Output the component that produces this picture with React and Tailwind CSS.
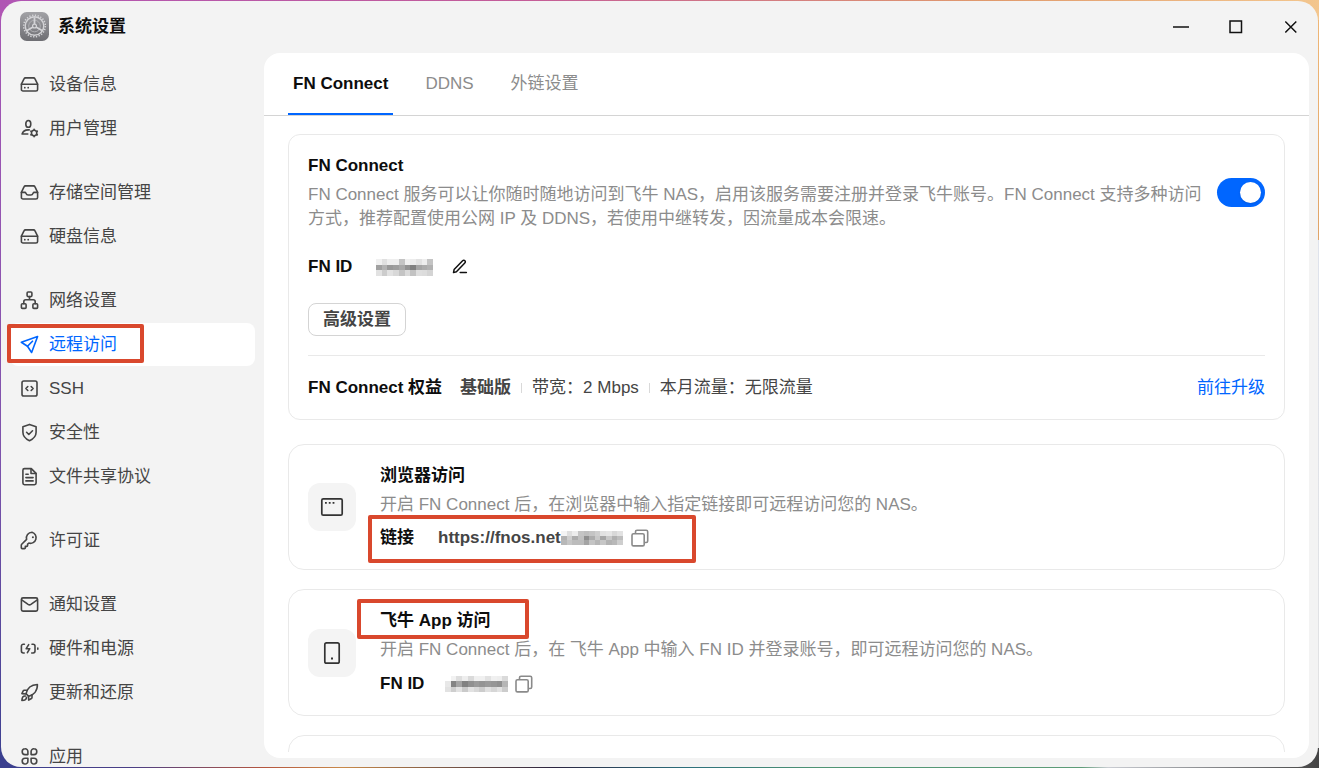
import { useState } from 'react';

const ICONS = {
  drive: (
    <>
      <path d="M1.4 9.2 4 3.9c.3-.7.9-1 1.600-1h7.800c.7 0 1.300.3 1.600 1l2.600 5.300v5.200c0 .9-.7 1.600-1.600 1.600H3c-.9 0-1.600-.7-1.600-1.600z" />
      <path d="M1.400 9.200h16.200" />
      <path d="M4.800 12.700h.01M8.200 12.700h.01" strokeWidth="1.800" />
    </>
  ),
  user: (
    <>
      <ellipse cx="8.300" cy="4.900" rx="2.500" ry="3.400" />
      <path d="M9.200 10.900c-3.600-.3-6.300 1.200-7.100 4.100H7.800" />
      <circle cx="14.100" cy="14" r="2.700" />
      <path d="M14.100 10.300v1M14.100 16.700v1M10.900 12.200l.8.400M16.500 15.400l.8.400M10.900 15.800l.8-.4M16.500 12.600l.8-.4" />
    </>
  ),
  inbox: (
    <>
      <path d="M1.400 9.400 4 3.900c.3-.7.9-1 1.600-1h7.800c.7 0 1.300.3 1.600 1l2.600 5.500v5c0 .9-.7 1.600-1.600 1.600H3c-.9 0-1.600-.7-1.600-1.600z" />
      <path d="M1.400 9.400h3.400c.6 0 .9.300 1.100.8.500 1.200 1.200 1.800 2.200 1.800h2.800c1 0 1.700-.6 2.200-1.800.2-.5.5-.8 1.100-.8h3.400" />
    </>
  ),
  network: (
    <>
      <rect x="7.100" y="1" width="4.800" height="4.600" rx="1" />
      <rect x="1.400" y="12.700" width="4.700" height="4.700" rx="1" />
      <rect x="12.900" y="12.700" width="4.700" height="4.700" rx="1" />
      <path d="M9.500 5.600v3.200M3.800 12.700v-1.900c0-1.200.8-2 2-2h7.400c1.200 0 2 .8 2 2v1.900" />
    </>
  ),
  plane: (
    <>
      <path d="M17.600 1.500 1.300 7.300l6.200 3.900 4.100 6.300z" />
      <path d="m7.500 11.200 5-5" />
    </>
  ),
  ssh: (
    <>
      <rect x="2" y="2" width="15" height="15" rx="1.800" />
      <path d="M7.800 7.500 5.900 9.500l1.900 2M11.200 7.500l1.900 2-1.900 2" />
    </>
  ),
  shield: (
    <>
      <path d="M9.500 1.400 2.900 3.700v5.600c0 4 2.700 6.600 6.600 8.400 3.900-1.800 6.600-4.400 6.600-8.400V3.700z" />
      <path d="m6.600 9.300 2.200 2.200 3.700-3.700" />
    </>
  ),
  file: (
    <>
      <path d="M11.300 1.600H4.500c-.9 0-1.600.7-1.600 1.600v12.900c0 .9.700 1.600 1.600 1.600h10c.9 0 1.600-.7 1.600-1.600V6.400z" />
      <path d="M11 1.800v4.700h4.900M5.900 7.300h2.300M5.900 10.600h7.200M5.900 13.900h7.200" />
    </>
  ),
  key: (
    <>
      <path d="M12 1.300a5.600 5.600 0 0 0-5.400 7.100L1.700 13.300c-.3.300-.4.600-.4 1v2.400c0 .5.400.9.900.9h2.300c.5 0 .8-.4.800-.8v-1.400h1.400c.5 0 .9-.4.900-.9v-1.400l1.300-1A5.600 5.600 0 1 0 12 1.300z" />
      <path d="M12.900 6.200h.01" strokeWidth="2" />
    </>
  ),
  mail: (
    <>
      <rect x="1.400" y="2.900" width="16.200" height="13.200" rx="1.600" />
      <path d="m1.700 4.800 6.400 4.600c.9.600 1.900.6 2.800 0l6.400-4.600" />
    </>
  ),
  power: (
    <>
      <path d="M4.400 5.200H3.300c-1 0-1.900.9-1.900 1.900v5c0 1 .9 1.900 1.900 1.900h.9M12 5.200h1.100c1 0 1.900.9 1.900 1.900v5c0 1-.9 1.900-1.900 1.900H11.700M17.800 9v1.300" />
      <path d="M8.700 5.700 6.200 9.700h3.600l-2.400 4" />
    </>
  ),
  rocket: (
    <>
      <path d="M6 10.700c1-4.700 4.800-8.900 11.400-9.200.2 6.600-4.200 10.500-8.700 11.800z" />
      <path d="M7 7.300H4.200c-.5 0-.8.200-1 .6L1.900 10.600l4.200.4M12 11.700v2.800c0 .5-.2.800-.6 1l-2.700 1.600-.2-3.900" />
      <path d="M5.300 13c-1.800-.3-3.300 1-3.400 4.500 3.300 0 4.600-1.500 4.600-3.300" />
    </>
  ),
  apps: (
    <>
      <path d="M7.900 7.600V4.500A2.700 2.700 0 0 0 5 1.800c-1.500 0-2.800 1.300-2.800 2.900 0 1.600 1.200 2.900 2.800 2.900z" />
      <path d="M11.100 7.600V4.500a2.700 2.700 0 0 1 2.900-2.700c1.500 0 2.800 1.300 2.800 2.900 0 1.600-1.200 2.900-2.800 2.900z" />
      <path d="M7.900 11.200v3.100A2.700 2.700 0 0 1 5 17c-1.500 0-2.800-1.300-2.800-2.900 0-1.600 1.200-2.900 2.800-2.900z" />
      <path d="M11.100 11.200v3.100A2.700 2.700 0 0 0 14 17c1.500 0 2.800-1.300 2.800-2.900 0-1.600-1.200-2.900-2.800-2.900z" />
    </>
  ),
};

const NAV_GROUPS = [
  [
    { id: 'device', label: '设备信息', icon: 'drive' },
    { id: 'users', label: '用户管理', icon: 'user' },
  ],
  [
    { id: 'storage', label: '存储空间管理', icon: 'inbox' },
    { id: 'disk', label: '硬盘信息', icon: 'drive' },
  ],
  [
    { id: 'network', label: '网络设置', icon: 'network' },
    { id: 'remote', label: '远程访问', icon: 'plane', marked: true },
    { id: 'ssh', label: 'SSH', icon: 'ssh' },
    { id: 'security', label: '安全性', icon: 'shield' },
    { id: 'share', label: '文件共享协议', icon: 'file' },
  ],
  [{ id: 'license', label: '许可证', icon: 'key' }],
  [
    { id: 'notify', label: '通知设置', icon: 'mail' },
    { id: 'power', label: '硬件和电源', icon: 'power' },
    { id: 'update', label: '更新和还原', icon: 'rocket' },
  ],
  [{ id: 'apps', label: '应用', icon: 'apps' }],
];

const TABS = ['FN Connect', 'DDNS', '外链设置'];

// Grey levels of the masked names, one row per line of blocks
const MASK_ID = [
  [240, 224, 238, 238, 196, 240, 236, 226, 238, 196],
  [160, 178, 152, 158, 168, 146, 128, 164, 172, 178],
  [226, 204, 226, 216, 196, 218, 194, 222, 220, 212],
];
const MASK_LINK = [
  [244, 222, 236, 196, 190, 196, 206, 226, 230, 216, 226],
  [178, 206, 172, 192, 142, 172, 200, 166, 200, 176, 190],
  [184, 198, 188, 188, 164, 196, 182, 198, 178, 184, 206],
];
const MASK_APP = [
  [255, 242, 222, 238, 218, 240, 240, 226, 240, 238, 218],
  [232, 132, 164, 130, 144, 154, 148, 154, 150, 144, 182],
  [226, 206, 226, 202, 226, 216, 204, 224, 214, 226, 204],
];

function Icon({ name }) {
  return (
    <svg viewBox="0 0 19 19" className="size-[19px] shrink-0" fill="none" stroke="currentColor" strokeWidth="1.600" strokeLinecap="round" strokeLinejoin="round" aria-hidden="true">
      {ICONS[name]}
    </svg>
  );
}

function Mask({ rows, className }) {
  return (
    <svg viewBox={`0 0 ${rows[0].length} 3`} preserveAspectRatio="none" shapeRendering="crispEdges" className={className} aria-hidden="true">
      {rows.map((row, y) =>
        row.map((v, x) => <rect key={`${x}-${y}`} x={x} y={y} width="1" height="1" fill={`rgb(${v},${v},${v})`} />)
      )}
    </svg>
  );
}

function CopyButton() {
  return (
    <button type="button" aria-label="复制" className="cursor-pointer text-[#8a8a8a]">
      <svg viewBox="0 0 18 18" className="size-[18px]" fill="none" stroke="currentColor" strokeWidth="1.600" strokeLinejoin="round">
        <rect x="1" y="4.700" width="12.200" height="12.200" rx="1.500" />
        <path d="M4.500 4.500V2.800c0-.8.700-1.500 1.500-1.500h9.200c.8 0 1.500.7 1.500 1.500V12c0 .8-.7 1.500-1.500 1.500h-1.700" />
      </svg>
    </button>
  );
}

function Marker({ className }) {
  return <span className={`absolute border-4 border-[#d9482d] rounded-[2px] pointer-events-none ${className}`} />;
}

function TitleBar() {
  return (
    <header className="h-[52px] shrink-0 flex items-center pl-[19px] pb-px">
      <svg viewBox="0 0 30 30" className="size-[29px]" aria-hidden="true">
        <defs>
          <linearGradient id="gear-bg" x1="0" y1="0" x2="0" y2="1">
            <stop offset="0" stopColor="#a2a2a6" />
            <stop offset="1" stopColor="#6e6e73" />
          </linearGradient>
        </defs>
        <rect width="30" height="30" rx="7" fill="url(#gear-bg)" />
        <g fill="none" stroke="#d3d3d6">
          <circle cx="15" cy="14.500" r="11.200" strokeWidth="1.600" strokeDasharray="1.400 1.532" />
          <circle cx="15" cy="14.500" r="9.600" strokeWidth="1.500" />
          <circle cx="15" cy="14.500" r="6" strokeWidth="0.900" stroke="#b4b4b8" />
          <path d="M15 5.500v7M13.500 15.500l-6.300 3.700M16.500 15.500l6.300 3.700" strokeWidth="1.800" />
          <circle cx="15" cy="14.500" r="2" strokeWidth="1.300" />
        </g>
      </svg>
      <h1 className="ml-[9px] text-[17px] leading-6 font-bold text-[#0d0d0d]">系统设置</h1>
      <div className="ml-auto flex self-stretch text-[#111]">
        <button type="button" aria-label="最小化" className="w-[55px] flex items-center justify-center">
          <svg viewBox="0 0 16 16" className="size-4" stroke="currentColor" strokeWidth="1.600"><path d="M0 8h16" /></svg>
        </button>
        <button type="button" aria-label="最大化" className="w-[55px] flex items-center justify-center">
          <svg viewBox="0 0 16 16" className="size-4" fill="none" stroke="currentColor" strokeWidth="1.500"><rect x="2" y="2" width="11.500" height="11.500" /></svg>
        </button>
        <button type="button" aria-label="关闭" className="w-[55px] flex items-center justify-center">
          <svg viewBox="0 0 16 16" className="size-4" stroke="currentColor" strokeWidth="1.500"><path d="m2.300 2.500 11 11M13.300 2.500l-11 11" /></svg>
        </button>
      </div>
    </header>
  );
}

function Sidebar({ active, onSelect }) {
  return (
    <nav className="w-[263px] shrink-0 pt-2.5 px-[9px] flex flex-col gap-[21px] overflow-hidden">
      {NAV_GROUPS.map((group, i) => (
        <ul key={i} className="flex flex-col gap-px">
          {group.map((item) => (
            <li key={item.id} className="relative">
              <button
                type="button"
                onClick={() => onSelect(item.id)}
                className={`w-full h-[43px] px-2.5 flex items-center gap-2.5 rounded-lg text-[17px] leading-6 text-left cursor-pointer ${
                  active === item.id ? 'bg-white text-[#0066ff]' : 'text-[#454545]'
                }`}
              >
                <Icon name={item.icon} />
                {item.label}
              </button>
              {item.marked && <Marker className="-left-[3px] top-px w-[137px] h-[39px]" />}
            </li>
          ))}
        </ul>
      ))}
    </nav>
  );
}

function ConnectCard() {
  const [enabled, setEnabled] = useState(true);

  return (
    <section className="border border-[#e9e9e9] rounded-xl p-[19px]">
      <div className="flex items-center gap-2">
        <div className="flex-1">
          <h2 className="font-bold text-[#0d0d0d]">FN Connect</h2>
          <p className="mt-[5px] text-[#8c8c8c]">
            FN Connect 服务可以让你随时随地访问到飞牛 NAS，启用该服务需要注册并登录飞牛账号。FN Connect 支持多种访问方式，推荐配置使用公网 IP 及 DDNS，若使用中继转发，因流量成本会限速。
          </p>
        </div>
        <label className="shrink-0 cursor-pointer">
          <input type="checkbox" aria-label="FN Connect" checked={enabled} onChange={(e) => setEnabled(e.target.checked)} className="peer sr-only" />
          <span className="flex items-center w-12 h-[29px] px-1 rounded-full bg-[#c8c8c8] peer-checked:bg-[#0066ff] peer-checked:justify-end">
            <span className="size-[21px] rounded-full bg-white shadow-sm" />
          </span>
        </label>
      </div>

      <div className="mt-6 flex items-center">
        <span className="font-bold text-[#0d0d0d]">FN ID</span>
        <Mask rows={MASK_ID} className="ml-6 w-[57px] h-[17px]" />
        <button type="button" aria-label="编辑" className="ml-[18px] cursor-pointer text-[#111]">
          <svg viewBox="0 0 18 18" className="size-[18px]" fill="none" stroke="currentColor" strokeWidth="1.500" strokeLinecap="round" strokeLinejoin="round">
            <path d="M2.500 14.600l.6-3 8.500-8.800c.7-.7 1.700-.7 2.300-.1.600.6.600 1.600-.1 2.300l-8.400 8.800z" />
            <path d="M9.200 14.600h6.200" />
          </svg>
        </button>
      </div>

      <button type="button" className="mt-6 h-[33px] px-[14px] flex items-center border border-[#d4d4d4] rounded-lg font-bold text-[#454545] cursor-pointer">
        高级设置
      </button>

      <div className="mt-[19px] pt-5 border-t border-[#e9e9e9] flex items-center text-[#454545]">
        <span className="font-bold text-[#0d0d0d]">FN Connect 权益</span>
        <span className="ml-[18px] font-bold">基础版</span>
        <span className="mx-2.5 w-px h-2.5 bg-[#d9d9d9]" />
        <span>带宽：2 Mbps</span>
        <span className="mx-2.5 w-px h-2.5 bg-[#d9d9d9]" />
        <span>本月流量：无限流量</span>
        <a href="#upgrade" className="ml-auto text-[#0066ff]">前往升级</a>
      </div>
    </section>
  );
}

function AccessCard({ icon, title, marked, description, children }) {
  return (
    <section className="mt-[19px] border border-[#e9e9e9] rounded-2xl p-[19px] flex items-center gap-6">
      <div className="size-12 shrink-0 rounded-xl bg-[#f4f4f4] text-[#333] flex items-center justify-center">{icon}</div>
      <div className="flex-1">
        <h2 className="relative font-bold text-[#0d0d0d]">
          {title}
          {marked && <Marker className="-left-[23px] -top-2.5 w-[172px] h-10" />}
        </h2>
        <p className="mt-[5px] text-[#8c8c8c]">{description}</p>
        {children}
      </div>
    </section>
  );
}

export default function App() {
  const [page, setPage] = useState('remote');
  const [tab, setTab] = useState('FN Connect');

  return (
    <div className="h-screen flex flex-col font-['Liberation_Sans','Noto_Sans_CJK_SC',sans-serif] text-[17px] leading-6 bg-[#3a3f8f]">
      {/* wallpaper showing round the window */}
      <div className="flex-1 min-h-0 flex flex-col p-px bg-no-repeat bg-[linear-gradient(to_right,#b055b4,#c45c98_40%,#e09a6c_75%,#f3c68e),linear-gradient(to_right,#3a3f8f,#4a3f86_10%,#b5563f_20%,#c98a4a_26%,#2b2440_42%,#2c6f7c_52%,#4f9474_62%,#5e9c78_82%,#c9ccd2_84%,#444),linear-gradient(to_bottom,#a855b5,#7c52ac_60%,#3a3f8f),linear-gradient(to_bottom,#f0b878,#e0a468_240px,#dfe3ec_240px,#e2e2e2)] bg-[length:100%_20px,100%_20px,50%_100%,50%_100%] bg-[position:left_top,left_bottom,left_top,right_top]">
        <div className="flex-1 min-h-0 bg-[#f3f3f3] rounded-[20px] overflow-hidden flex flex-col">
          <TitleBar />
          <div className="flex-1 min-h-0 flex">
            <Sidebar active={page} onSelect={setPage} />
            <main className="flex-1 min-w-0 mr-[9px] mb-[9px] bg-white rounded-2xl overflow-hidden flex flex-col">
              <div role="tablist" className="shrink-0 h-[63px] px-6 flex gap-[27px] border-b border-[#d4d4d4]">
                {TABS.map((t) => (
                  <button
                    key={t}
                    type="button"
                    role="tab"
                    aria-selected={tab === t}
                    onClick={() => setTab(t)}
                    className={`px-[5px] border-y-2 border-t-transparent cursor-pointer ${
                      tab === t ? 'font-bold text-[#0d0d0d] border-b-[#0066ff]' : 'text-[#8c8c8c] border-b-transparent'
                    }`}
                  >
                    {t}
                  </button>
                ))}
              </div>

              <div className="flex-1 min-h-0 mb-1.5 px-6 pt-[18px] overflow-hidden">
                <ConnectCard />

                <div className="pt-[5px]">
                  <AccessCard
                    title="浏览器访问"
                    description="开启 FN Connect 后，在浏览器中输入指定链接即可远程访问您的 NAS。"
                    icon={
                      <svg viewBox="0 0 24 24" className="size-6" fill="none" stroke="currentColor" strokeWidth="1.700">
                        <rect x="1.800" y="3.800" width="20.400" height="16.400" rx="1.500" />
                        <path d="M5 7.900h1.800M8.800 7.900h1.800M12.600 7.900h1.800" strokeWidth="1.800" />
                      </svg>
                    }
                  >
                    <div className="relative mt-[9px] flex items-center">
                      <span className="font-bold text-[#0d0d0d]">链接</span>
                      <span className="ml-6 font-bold text-[#454545]">https://fnos.net</span>
                      <Mask rows={MASK_LINK} className="w-[62px] h-[14px]" />
                      <span className="ml-2 flex"><CopyButton /></span>
                      <Marker className="-left-3 -top-[11px] w-[328px] h-12" />
                    </div>
                  </AccessCard>
                </div>

                <AccessCard
                  title="飞牛 App 访问"
                  marked
                  description="开启 FN Connect 后，在 飞牛 App 中输入 FN ID 并登录账号，即可远程访问您的 NAS。"
                  icon={
                    <svg viewBox="0 0 24 24" className="size-6" fill="none" stroke="currentColor" strokeWidth="1.700">
                      <rect x="4.800" y="1.800" width="14.400" height="20.400" rx="1.800" />
                      <path d="M11 17.600h2" strokeWidth="2" />
                    </svg>
                  }
                >
                  <div className="mt-2.5 flex items-center">
                    <span className="font-bold text-[#0d0d0d]">FN ID</span>
                    <Mask rows={MASK_APP} className="ml-[21px] w-[63px] h-4" />
                    <span className="ml-[7px] flex"><CopyButton /></span>
                  </div>
                </AccessCard>

                <section className="mt-[19px] h-32 border border-[#e9e9e9] rounded-2xl" />
              </div>
            </main>
          </div>
        </div>
      </div>
    </div>
  );
}
